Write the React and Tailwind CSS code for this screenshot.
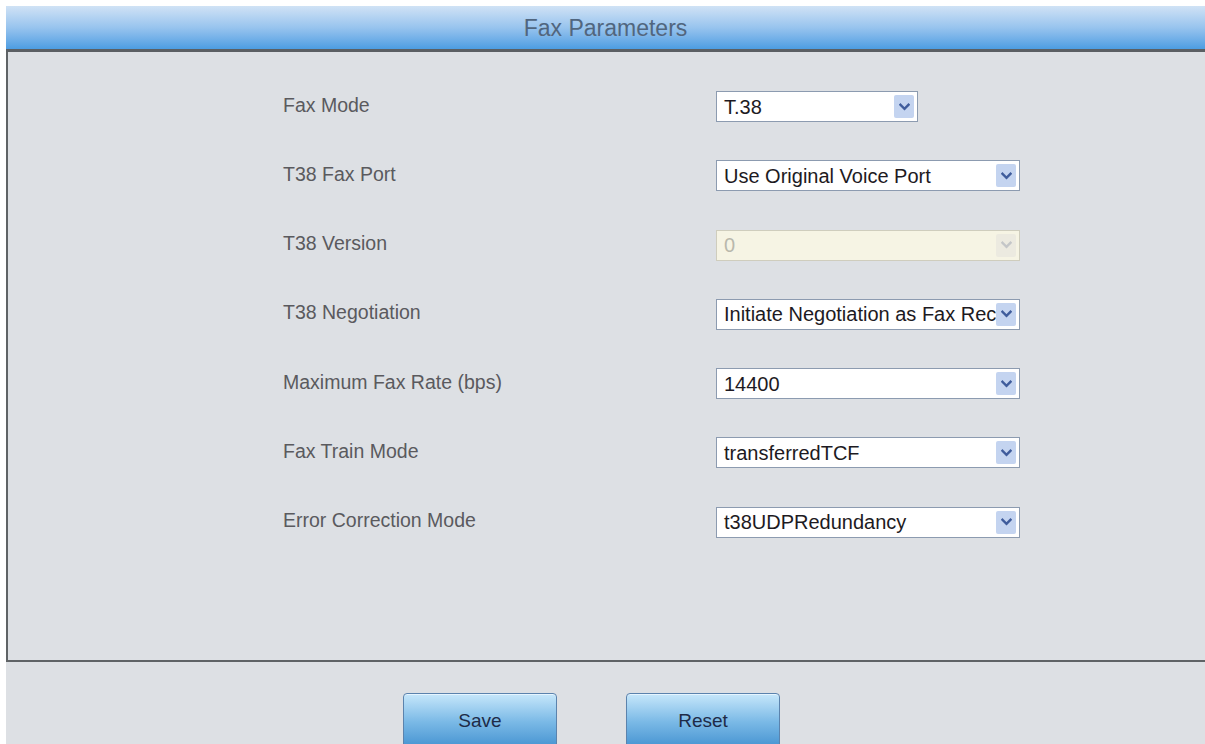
import React from "react";

const rows = [
  { label: "Fax Mode", value: "T.38", narrow: true },
  { label: "T38 Fax Port", value: "Use Original Voice Port" },
  { label: "T38 Version", value: "0", disabled: true },
  { label: "T38 Negotiation", value: "Initiate Negotiation as Fax Receiver" },
  { label: "Maximum Fax Rate (bps)", value: "14400" },
  { label: "Fax Train Mode", value: "transferredTCF" },
  { label: "Error Correction Mode", value: "t38UDPRedundancy" },
];

function Chevron({ disabled }) {
  return (
    <svg width="11" height="8" viewBox="0 0 11 8">
      <path
        d="M1.5 1.8 L5.5 5.8 L9.5 1.8"
        fill="none"
        stroke={disabled ? "#c4c6c8" : "#3f5c9c"}
        strokeWidth="2.4"
        strokeLinecap="square"
      />
    </svg>
  );
}

function SelectBox({ value, narrow, disabled }) {
  return (
    <div
      className={
        "flex h-[31px] items-center border " +
        (narrow ? "w-[202px] " : "w-[304px] ") +
        (disabled
          ? "border-[#cfcdbd] bg-[#f6f4e4]"
          : "border-[#8c9bb0] bg-white")
      }
    >
      <div
        className={
          "min-w-0 flex-1 overflow-hidden whitespace-nowrap pl-[7px] text-[20px] leading-[26px] " +
          (disabled ? "text-[#b9b8ac]" : "text-[#1d1a22]")
        }
      >
        {value}
      </div>
      <div
        className={
          "mr-[3px] flex h-[23px] w-[20px] shrink-0 items-center justify-center rounded-[2px] " +
          (disabled ? "bg-[#eceae0]" : "bg-[#c4d4f0]")
        }
      >
        <Chevron disabled={disabled} />
      </div>
    </div>
  );
}

function Button({ children }) {
  return (
    <button className="h-[58px] w-[154px] shrink-0 rounded-[4px] border border-[#5b83ad] bg-gradient-to-b from-[#c6e7fa] via-[#7ab9e6] to-[#3f8fcf] pb-[2px] text-[19px] text-[#1e2b47] shadow-[inset_0_1px_0_#e6f5ff]">
      {children}
    </button>
  );
}

export default function App() {
  return (
    <div
      className="h-[744px] w-[1205px] overflow-hidden bg-white pl-[6px] pt-[6px]"
      style={{ fontFamily: '"Liberation Sans", Arial, sans-serif' }}
    >
      <div className="flex h-full flex-col bg-[#dde0e4]">
        {/* title bar */}
        <div className="flex h-[43px] shrink-0 items-center justify-center bg-gradient-to-b from-[#d0e2f5] via-[#98c4ee] to-[#4c9de2] pt-[2px] text-[23px] text-[#50667f] [text-shadow:0_0_1px_#9fc2e6]">
          Fax Parameters
        </div>
        <div className="h-[3px] shrink-0 bg-[#5b5f63]" />

        {/* settings panel */}
        <div className="flex h-[610px] shrink-0 flex-col gap-y-[38.3px] border-b-2 border-l-2 border-[#5f6366] pl-[275px] pt-[39px]">
          {rows.map((r) => (
            <div key={r.label} className="flex h-[31px] items-center">
              <div className="w-[433px] pb-[4px] text-[19.5px] leading-[24px] text-[#5a5a5e]">
                {r.label}
              </div>
              <SelectBox value={r.value} narrow={r.narrow} disabled={r.disabled} />
            </div>
          ))}
        </div>

        {/* actions */}
        <div className="flex shrink-0 gap-x-[69px] pl-[397px] pt-[31px]">
          <Button>Save</Button>
          <Button>Reset</Button>
        </div>
      </div>
    </div>
  );
}
